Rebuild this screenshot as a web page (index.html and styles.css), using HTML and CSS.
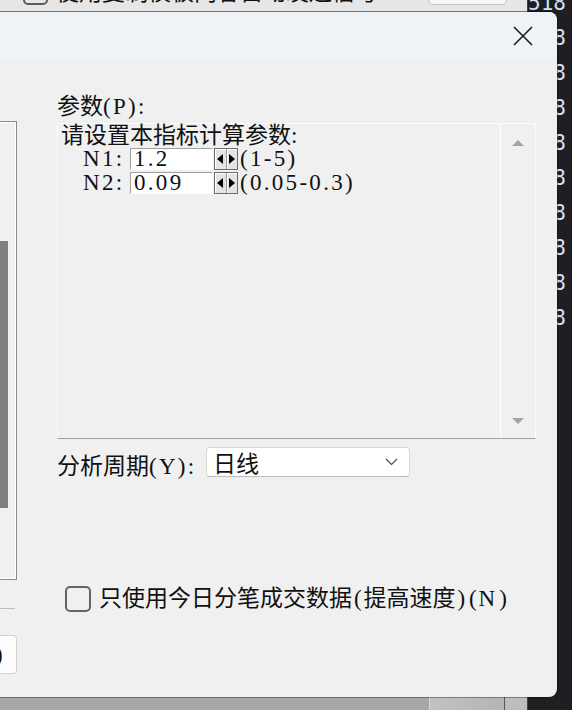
FILE: index.html
```html
<!DOCTYPE html>
<html lang="zh-CN">
<head>
    <meta charset="UTF-8">
    <meta name="viewport" content="width=device-width, initial-scale=1.0">
    <title>指标参数设置</title>
    <link rel="stylesheet" href="styles.css">
</head>
<body>
    <div class="desktop">
        <!-- window behind the dialog, only its bottom edge shows -->
        <div class="back-window">
            <span class="back-check"></span>
            <span class="back-text">使用复制模板内容自动发送信号</span>
            <span class="back-btn"></span>
        </div>

        <div class="terminal">
            <div>518</div>
            <div>518</div>
            <div>518</div>
            <div>518</div>
            <div>518</div>
            <div>518</div>
            <div>518</div>
            <div>518</div>
            <div>518</div>
            <div>518</div>
        </div>

        <div class="taskbar">
            <span class="task task-main"></span>
            <span class="task task-mid"></span>
            <span class="task task-end"></span>
        </div>

        <div class="dialog">
            <div class="title-bar">
                <button class="close-btn" aria-label="关闭">
                    <svg width="20" height="20" viewBox="0 0 20 20">
                        <path d="M1 1 L19 19 M19 1 L1 19" stroke="#1b1b1b" stroke-width="1.6" fill="none"/>
                    </svg>
                </button>
            </div>

            <div class="dialog-body">
                <div class="side">
                    <div class="side-box"><div class="side-bar"></div></div>
                    <div class="side-line"></div>
                    <div class="side-btn"><span>)</span></div>
                </div>

                <div class="main">
                    <div class="field-label">参数<span class="en">(P):</span></div>

                    <div class="param-box">
                        <div class="param-list">
                            <div class="param-head">请设置本指标计算参数<span class="en">:</span></div>
                            <div class="param-row">
                                <span class="param-name en">N1:</span>
                                <span class="param-input en">1.2</span>
                                <span class="spin"><span class="spin-half"><i class="tri-left"></i></span><span class="spin-half"><i class="tri-right"></i></span></span>
                                <span class="param-range en">(1-5)</span>
                            </div>
                            <div class="param-row">
                                <span class="param-name en">N2:</span>
                                <span class="param-input en">0.09</span>
                                <span class="spin"><span class="spin-half"><i class="tri-left"></i></span><span class="spin-half"><i class="tri-right"></i></span></span>
                                <span class="param-range en">(0.05-0.3)</span>
                            </div>
                        </div>
                        <div class="scroll">
                            <i class="arrow-up"></i>
                            <i class="arrow-down"></i>
                        </div>
                    </div>

                    <div class="period-row">
                        <span class="period-label">分析周期<span class="en">(Y):</span></span>
                        <div class="select">
                            <span>日线</span>
                            <svg width="13" height="8" viewBox="0 0 13 8">
                                <path d="M1 1 L6.5 6.5 L12 1" stroke="#4a4a4a" stroke-width="1.2" fill="none"/>
                            </svg>
                        </div>
                    </div>

                    <label class="tick-row">
                        <span class="tick"></span>
                        <span>只使用今日分笔成交数据<span class="paren">(</span>提高速度<span class="paren">)</span><span class="paren">(</span><span class="en">N</span><span class="paren">)</span></span>
                    </label>
                </div>
            </div>
        </div>
    </div>
</body>
</html>
```

FILE: styles.css
```css
* {
    margin: 0;
    padding: 0;
    box-sizing: border-box;
}

body {
    width: 572px;
    height: 710px;
    overflow: hidden;
    font-family: "Liberation Serif", "Noto Sans CJK SC", serif;
    font-size: 23px;
    color: #111;
    background: #1e1f22;
}

.en {
    letter-spacing: 0.1em;
}

/* half-width bracket cell, like the dialog's system font */
.paren {
    display: inline-block;
    width: 0.5em;
    text-align: center;
}

.desktop {
    position: relative;
    width: 572px;
    height: 710px;
    overflow: hidden;
    background: #a6a6a6;
}

/* back window strip */
.back-window {
    position: absolute;
    top: 0;
    left: 0;
    width: 527px;
    height: 12px;
    background: #e6e6e6;
    border-bottom: 1px solid #b3b3b3;
    display: flex;
    align-items: flex-start;
    overflow: hidden;
}

.back-check {
    width: 25px;
    height: 25px;
    margin: -20px 0 0 23px;
    border: 2px solid #5c5c5c;
    border-radius: 5px;
    flex-shrink: 0;
}

.back-text {
    margin: -19px 0 0 8px;
    line-height: 23px;
    white-space: nowrap;
    width: 372px;
    overflow: hidden;
}

.back-btn {
    width: 79px;
    height: 20px;
    margin-top: -15px;
    background: #f6f6f6;
    border: 1px solid #c4c4c4;
    border-radius: 0 0 5px 5px;
}

/* terminal on the right */
.terminal {
    position: absolute;
    top: 0;
    right: 0;
    width: 45px;
    height: 710px;
    background: #1e1f22;
    border-left: 1px solid #6e2e2e;
    font-family: "DejaVu Sans Mono", monospace;
    font-size: 21px;
    line-height: 35px;
    color: #d6def0;
    text-align: right;
    padding-right: 7px;
}

.terminal div:first-child {
    margin-top: -14px;
}

.taskbar {
    position: absolute;
    left: 0;
    bottom: 0;
    width: 527px;
    height: 13px;
    display: flex;
}

.task-main {
    width: 429px;
    background: #a7a7a7;
}

.task-mid {
    width: 75px;
    background: linear-gradient(90deg, #c2c2c2, #b4b4b4);
    border-left: 1px solid #d4d4d4;
}

.task-end {
    flex: 1;
    background: #bdbdbd;
    border-left: 1px solid #555;
}

/* dialog */
.dialog {
    position: absolute;
    top: 12px;
    left: 0;
    width: 557px;
    height: 685px;
    background: #f0f0f0;
    border-radius: 0 8px 8px 0;
    box-shadow: 0 0 0 1px rgba(0, 0, 0, 0.35);
    overflow: hidden;
}

.title-bar {
    height: 47px;
    background: #eff3f8;
    display: flex;
    justify-content: flex-end;
    align-items: center;
    padding-right: 23px;
}

.close-btn {
    width: 22px;
    height: 22px;
    border: none;
    background: none;
    display: flex;
    align-items: center;
    justify-content: center;
}

.dialog-body {
    display: flex;
    height: 638px;
}

.side {
    width: 17px;
    padding-top: 62px;
}

.side-box {
    height: 459px;
    border: 1px solid #8a8a8a;
    border-left: none;
    box-shadow: inset -1px 0 #fff, inset 0 1px #fff, inset 0 -1px #fff;
    padding-top: 119px;
}

.side-bar {
    width: 8px;
    height: 267px;
    background: #808080;
}

.side-line {
    margin-top: 28px;
    width: 15px;
    height: 1px;
    background: #bdbdbd;
}

.side-btn {
    margin-top: 26px;
    width: 17px;
    height: 39px;
    background: #fdfdfd;
    border: 1px solid #d2d2d2;
    border-left: none;
    border-radius: 0 4px 4px 0;
    overflow: hidden;
    line-height: 37px;
}

.side-btn span {
    display: block;
    margin-left: -5px;
}

.main {
    width: 519px;
    padding: 36px 0 0 40px;
}

.field-label {
    height: 24px;
    line-height: 24px;
}

.param-box {
    margin-top: 4px;
    width: 479px;
    height: 316px;
    border: 1px solid #fbfbfb;
    border-bottom-color: #a0a0a0;
    display: flex;
}

.param-list {
    flex: 1;
    padding: 0 0 0 3px;
}

.param-head {
    height: 24px;
    line-height: 24px;
}

.param-row {
    height: 24px;
    display: flex;
    align-items: flex-start;
    line-height: 22px;
}

.param-name {
    width: 47px;
    margin-left: 22px;
}

.param-input {
    width: 83px;
    height: 22px;
    background: #fff;
    border: 1px solid;
    border-color: #a0a0a0 #fff #fff #a0a0a0;
    padding-left: 3px;
    line-height: 20px;
}

.spin {
    width: 24px;
    height: 22px;
    margin-left: 1px;
    border: 1px solid #6c6c6c;
    background: #e4e4e4;
    display: flex;
}

.spin-half {
    flex: 1;
    display: flex;
    align-items: center;
    justify-content: center;
    box-shadow: inset 1px 1px #fff;
}

.spin-half + .spin-half {
    border-left: 1px solid #9a9a9a;
}

.tri-left {
    border-right: 6px solid #000;
    border-top: 5px solid transparent;
    border-bottom: 5px solid transparent;
}

.tri-right {
    border-left: 6px solid #000;
    border-top: 5px solid transparent;
    border-bottom: 5px solid transparent;
}

.param-range {
    margin-left: 2px;
}

.scroll {
    width: 35px;
    border-left: 1px solid #fff;
    display: flex;
    flex-direction: column;
    align-items: center;
    justify-content: space-between;
    padding: 16px 0 14px;
}

.arrow-up {
    border-bottom: 6px solid #a3a3a3;
    border-left: 6px solid transparent;
    border-right: 6px solid transparent;
}

.arrow-down {
    border-top: 6px solid #a3a3a3;
    border-left: 6px solid transparent;
    border-right: 6px solid transparent;
}

.period-row {
    margin-top: 8px;
    height: 30px;
    display: flex;
    align-items: center;
}

.period-label {
    width: 149px;
    padding-top: 4px;
}

.select {
    width: 204px;
    height: 30px;
    background: #fff;
    border: 1px solid #d9d9d9;
    border-bottom-color: #bdbdbd;
    border-radius: 4px;
    padding: 0 11px 0 6px;
    display: flex;
    align-items: center;
    justify-content: space-between;
}

.tick-row {
    margin-top: 109px;
    padding-left: 8px;
    height: 26px;
    line-height: 26px;
    display: flex;
    align-items: center;
    gap: 8px;
}

.tick {
    width: 26px;
    height: 26px;
    border: 2px solid #656565;
    border-radius: 5px;
}
```
